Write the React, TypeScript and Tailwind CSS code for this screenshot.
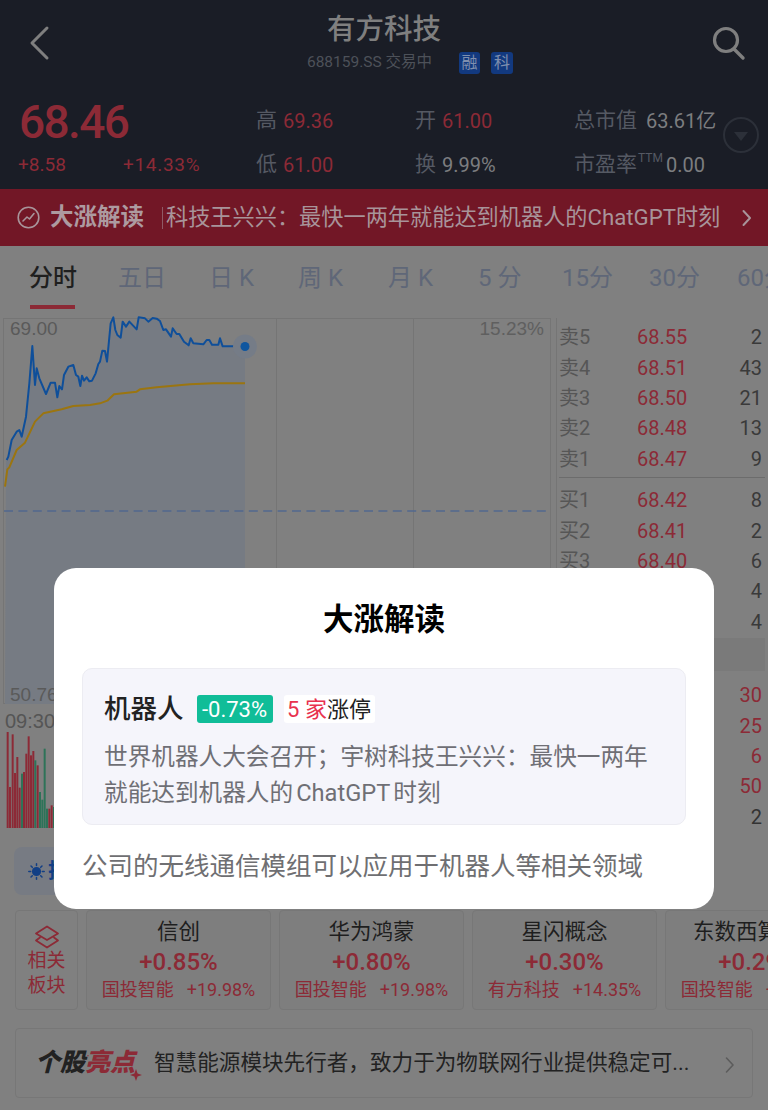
import React from "react";

const BLUE_LINE =
  "20,450 25,440 35,390 50,365 58,360 65,380 78,320 88,220 97,108 105,225 110,175 118,205 138,252 152,218 165,218 172,262 178,228 186,238 192,195 205,170 220,165 228,195 235,200 241,228 246,197 252,212 260,202 268,214 276,212 287,190 295,162 300,155 307,122 315,123 321,155 332,40 340,22 346,60 352,75 362,83 368,35 378,50 388,35 410,58 416,22 435,25 445,35 458,24 470,26 480,33 490,60 498,58 513,80 518,55 530,72 538,72 552,95 566,106 572,85 580,100 610,103 620,90 628,90 636,104 655,104 660,85 668,109 735,109";
const YELLOW_LINE =
  "15,530 22,478 28,472 50,420 75,398 105,335 130,310 185,298 220,288 270,285 300,280 322,272 342,253 410,245 420,238 470,232 570,223 640,220 735,220";

// points were read off a 3x crop, bring them back to chart pixels
const toChart = (line: string) =>
  line
    .split(" ")
    .map((p) => {
      const [x, y] = p.split(",");
      return `${+x / 3},${+y / 3 - 8}`;
    })
    .join(" ");

const VOLUME: [number, number, string][] = [
  [20, 155, "r"], [27, 320, "r"], [35, 162, "r"], [42, 278, "r"], [49, 230, "r"], [56, 322, "r"],
  [63, 280, "g"], [69, 275, "r"], [76, 220, "r"], [83, 168, "r"], [90, 225, "r"], [97, 212, "r"],
  [103, 240, "g"], [110, 255, "r"], [117, 335, "g"], [124, 358, "g"], [131, 205, "g"], [138, 385, "g"],
  [145, 385, "r"], [152, 375, "r"], [159, 380, "g"],
];

const SELLS = [
  ["卖5", "68.55", "2"],
  ["卖4", "68.51", "43"],
  ["卖3", "68.50", "21"],
  ["卖2", "68.48", "13"],
  ["卖1", "68.47", "9"],
];
const BUYS = [
  ["买1", "68.42", "8"],
  ["买2", "68.41", "2"],
  ["买3", "68.40", "6"],
  ["买4", "68.39", "4"],
  ["买5", "68.38", "4"],
];
const TRADES = [
  ["30", "text-[#8c2a36]"],
  ["25", "text-[#8c2a36]"],
  ["6", "text-[#8c2a36]"],
  ["50", "text-[#8c2a36]"],
  ["2", "text-[#333333]"],
];

const SECTORS = [
  ["信创", "+0.85%", "国投智能", "+19.98%"],
  ["华为鸿蒙", "+0.80%", "国投智能", "+19.98%"],
  ["星闪概念", "+0.30%", "有方科技", "+14.35%"],
  ["东数西算概念", "+0.29%", "国投智能", "+19.98%"],
];

const TABS: [string, string][] = [
  ["五日", "w-[47px] ml-[42px]"],
  ["日 K", "w-[45px] ml-[44px]"],
  ["周 K", "w-[45px] ml-[44px]"],
  ["月 K", "w-[45px] ml-[45px]"],
  ["5 分", "w-[42px] ml-[45px]"],
  ["15分", "w-[53px] ml-[42px]"],
  ["30分", "w-[58px] ml-[34px]"],
  ["60分", "w-[58px] ml-[30px]"],
];

function Stat({ label, value, red, w, gap = "mr-[6px]" }: { label: string; value: string; red?: boolean; w: string; gap?: string }) {
  return (
    <div className={`flex items-center ${w}`}>
      <span className={`text-[21px] text-[#555963] ${gap}`}>{label}</span>
      <span className={`text-[20px] ${red ? "text-[#8c2a36]" : "text-[#7c7d80]"}`}>{value}</span>
    </div>
  );
}

function BookRow({ row }: { row: string[] }) {
  return (
    <div className="flex items-center h-[30.4px] text-[20px] leading-none">
      <span className="w-[78px] text-[#565656]">{row[0]}</span>
      <span className="text-[#8c2a36]">{row[1]}</span>
      <span className="ml-auto text-[#3a3a3a]">{row[2]}</span>
    </div>
  );
}

export default function App() {
  return (
    <div className="relative w-[768px] h-[1110px] overflow-hidden bg-[#808080] font-['Roboto','Noto_Sans_CJK_SC',sans-serif]">
      {/* header */}
      <div className="relative h-[189px] bg-[#1a1d26]">
        <div className="flex flex-col items-center pt-[11px]">
          <div className="text-[28.5px] leading-[38px] font-medium text-[#7f7f7f]">有方科技</div>
          <div className="flex items-center mt-[3px] h-[22px] ml-[52px]">
            <span className="text-[15.5px] text-[#4d5159]">688159.SS 交易中</span>
            <span className="ml-[27px] w-[21px] h-[22px] rounded-[3px] bg-[#12397f] text-[#7f8fae] text-[16px] flex items-center justify-center">融</span>
            <span className="ml-[11px] w-[22px] h-[22px] rounded-[3px] bg-[#12397f] text-[#7f8fae] text-[16px] flex items-center justify-center">科</span>
          </div>
        </div>
        <svg className="absolute left-[28px] top-[25px]" width="24" height="36" viewBox="0 0 24 36" fill="none">
          <path d="M19 3 L4 18 L19 33" stroke="#7f7f7f" strokeWidth="3" strokeLinecap="round" strokeLinejoin="round" />
        </svg>
        <svg className="absolute left-[711px] top-[25px]" width="36" height="36" viewBox="0 0 36 36" fill="none">
          <circle cx="15" cy="15" r="11.5" stroke="#7f7f7f" strokeWidth="3.2" />
          <path d="M23 24 L32 33" stroke="#7f7f7f" strokeWidth="3.4" strokeLinecap="round" />
        </svg>

        <div className="flex absolute left-0 top-[99px] w-full">
          <div className="w-[256px] pl-[18px]">
            <div className="text-[46px] leading-[46px] font-medium tracking-[-1.6px] text-[#8c2a36] pl-[1px]">68.46</div>
            <div className="flex mt-[8px] text-[19px] leading-[24px] text-[#8c2a36]">
              <span className="w-[105px]">+8.58</span>
              <span className="tracking-[0.7px]">+14.33%</span>
            </div>
          </div>
          <div className="flex flex-col gap-[19px] pt-[9px]">
            <div className="flex h-[25px]">
              <Stat label="高" value="69.36" red w="w-[159px]" />
              <Stat label="开" value="61.00" red w="w-[159px]" />
              <Stat label="总市值" value="63.61亿" gap="mr-[9px]" w="w-[165px]" />
            </div>
            <div className="flex h-[25px]">
              <Stat label="低" value="61.00" red w="w-[159px]" />
              <Stat label="换" value="9.99%" w="w-[159px]" />
              <div className="flex items-center">
                <span className="text-[21px] text-[#555963]">市盈率</span>
                <span className="text-[12px] text-[#555963] self-start leading-[12px] ml-[1px]">TTM</span>
                <span className="text-[20px] text-[#7c7d80] ml-[3px]">0.00</span>
              </div>
            </div>
          </div>
        </div>
        <div className="absolute left-[723px] top-[117px] w-[36px] h-[36px] rounded-full border-2 border-[#2c3039] flex items-center justify-center">
          <div className="w-0 h-0 mt-[3px] border-l-[7px] border-r-[7px] border-t-[9px] border-l-transparent border-r-transparent border-t-[#2c3039]" />
        </div>
      </div>

      {/* red banner */}
      <div className="flex items-center h-[57px] bg-[#721726] pl-[17px]">
        <svg width="23" height="23" viewBox="0 0 23 23" fill="none" className="shrink-0">
          <circle cx="11.5" cy="11.5" r="10.3" stroke="#a8949a" strokeWidth="1.6" />
          <path d="M6 15 L10 11 L12.5 13 L17 7.5" stroke="#a8949a" strokeWidth="1.6" strokeLinecap="round" strokeLinejoin="round" />
        </svg>
        <span className="ml-[10px] text-[23.5px] font-bold text-[#ad9aa0] shrink-0">大涨解读</span>
        <div className="ml-[18px] w-[1px] h-[22px] bg-[#8f5a65] shrink-0" />
        <span className="ml-[3px] text-[22.2px] text-[#a8949a] whitespace-nowrap">科技王兴兴：最快一两年就能达到机器人的ChatGPT时刻</span>
        <svg width="12" height="20" viewBox="0 0 12 20" fill="none" className="absolute left-[741px]">
          <path d="M2.5 3 L9 10 L2.5 17" stroke="#a8949a" strokeWidth="2" strokeLinecap="round" strokeLinejoin="round" />
        </svg>
      </div>

      {/* tabs */}
      <div className="flex items-center h-[64px] pl-[29px] whitespace-nowrap overflow-hidden text-[24px] relative">
        <span className="w-[47px] font-medium text-[#1f1f1f]">分时</span>
        {TABS.map(([t, cls]) => (
          <span key={t} className={`shrink-0 text-[#5f6778] ${cls}`}>{t}</span>
        ))}
        <div className="absolute left-[30px] top-[59px] w-[45px] h-[4px] bg-[#8c2a36]" />
      </div>

      {/* chart + order book */}
      <div className="flex h-[386px] mt-[8px] pl-[3px]">
        <div className="relative w-[548px] h-[386px] border border-[#757575]">
          <div className="absolute left-[136px] top-0 h-full w-px bg-[#757575]" />
          <div className="absolute left-[272px] top-0 h-full w-px bg-[#757575]" />
          <div className="absolute left-[409px] top-0 h-full w-px bg-[#757575]" />
          <svg className="absolute left-[-4px] top-[-1px] overflow-visible" width="551" height="386" viewBox="0 0 551 386" fill="none">
            <polygon points={`6,142 ${toChart(BLUE_LINE)} 245,386 5,386`} fill="#767b83" />
            <line x1="4" y1="193" x2="551" y2="193" stroke="#52688f" strokeWidth="1.4" strokeDasharray="9 5.4" />
            <polyline points={toChart(BLUE_LINE)} stroke="#0f4f9a" strokeWidth="2" strokeLinejoin="round" />
            <polyline points={toChart(YELLOW_LINE)} stroke="#9b7510" strokeWidth="2" strokeLinejoin="round" />
            <circle cx="245" cy="28.5" r="12" fill="#757c87" />
            <circle cx="245" cy="28.5" r="4.5" fill="#0f569f" />
          </svg>
          <span className="absolute left-[6px] top-[0px] text-[19px] leading-[20px] text-[#5a5a5a] font-['Liberation_Sans',sans-serif]">69.00</span>
          <span className="absolute right-[6px] top-[0px] text-[19px] leading-[20px] text-[#5f5f5f] font-['Liberation_Sans',sans-serif]">15.23%</span>
          <span className="absolute left-[6px] bottom-[-2px] text-[19px] leading-[20px] text-[#5a5a5a] font-['Liberation_Sans',sans-serif]">50.76</span>
        </div>
        <div className="w-[209px] ml-[5px] pr-[3px] pl-[2px] pt-[4px] border-l border-[#757575]">
          <div>
            {SELLS.map((r) => (
              <BookRow key={r[0]} row={r} />
            ))}
          </div>
          <div className="h-px bg-[#6c6c6c] mt-[3px] mb-[7px] -mr-[3px]" />
          <div>
            {BUYS.map((r) => (
              <BookRow key={r[0]} row={r} />
            ))}
          </div>
          <div className="h-[33px] bg-[#7a7a7a] mt-[1px] -mr-[3px]" />
        </div>
      </div>

      {/* volume and trades */}
      <div className="flex h-[137px] pl-[4px]">
        <div className="relative w-[549px]">
          <span className="absolute left-[1px] top-[6px] text-[20px] leading-[22px] text-[#555555] font-['Liberation_Sans',sans-serif]">09:30</span>
          <svg className="absolute left-[-4px] top-[0px]" width="60" height="135" viewBox="0 0 60 135" fill="none">
            {VOLUME.map(([x, y, c]) => (
              <rect key={x} x={x / 3} y={28 + (y - 155) / 3} width="2" height={(443 - y) / 3} fill={c === "r" ? "#8c2a36" : "#2d7358"} />
            ))}
          </svg>
        </div>
        <div className="flex-1 pr-[6px] -mt-[24px]">
          {TRADES.map(([q, cls]) => (
            <div key={q} className={`h-[30.4px] flex items-center justify-end text-[20px] leading-none ${cls}`}>{q}</div>
          ))}
        </div>
      </div>

      {/* strip behind the dialog, its right end is hidden */}
      <div className="ml-[14px] w-[400px] mt-[6px] h-[48px] rounded-[8px] bg-[#777b83] flex items-center pl-[14px]">
        <svg width="17" height="17" viewBox="0 0 17 17" fill="none">
          <circle cx="8.5" cy="8.5" r="4.6" fill="#123f85" />
          <path d="M8.5 0.8V2.6M8.5 14.4v1.8M0.8 8.5h1.8M14.4 8.5h1.8M3 3l1.3 1.3M12.7 12.7L14 14M3 14l1.3-1.3M12.7 4.3L14 3" stroke="#123f85" strokeWidth="1.5" strokeLinecap="round" />
        </svg>
        <span className="ml-[3px] text-[20px] font-bold text-[#123f85]">技术分析</span>
      </div>

      {/* related sectors */}
      <div className="flex items-stretch h-[100px] mt-[15px] pl-[15px] gap-[8px] overflow-hidden">
        <div className="shrink-0 w-[63px] border border-[#777777] rounded-[4px] flex flex-col items-center pt-[14px]">
          <svg width="28" height="24" viewBox="0 0 28 24" fill="none">
            <path d="M14 1.5 L25 8.5 L14 15 L3 8.5 Z" stroke="#8c2a36" strokeWidth="1.8" strokeLinejoin="round" />
            <path d="M7 12.5 L3 15.5 L14 22.5 L25 15.5 L21 12.5" stroke="#8c2a36" strokeWidth="1.8" strokeLinejoin="round" strokeLinecap="round" />
          </svg>
          <div className="text-[19px] leading-[25px] text-[#8c2a36] text-center mt-[-1px] w-[40px]">相关板块</div>
        </div>
        {SECTORS.map(([name, pct, stock, change]) => (
          <div key={name} className="shrink-0 w-[185px] border border-[#777777] rounded-[4px] bg-[#7e7e7e] flex flex-col items-center pt-[7px] whitespace-nowrap">
            <div className="text-[21.5px] leading-[28px] text-[#1e1e1e]">{name}</div>
            <div className="text-[24px] leading-[32px] font-medium text-[#8c2a36]">{pct}</div>
            <div className="flex gap-[13px] text-[18px] leading-[23px] text-[#8c2a36]">
              <span>{stock}</span>
              <span>{change}</span>
            </div>
          </div>
        ))}
      </div>

      {/* highlight row */}
      <div className="relative flex items-center mx-[15px] mt-[18px] h-[70px] border border-[#777777] rounded-[4px] pl-[19px] pr-[16px]">
        <span className="w-[100px] text-[25px] font-black italic text-[#222222] whitespace-nowrap">个股<span className="text-[#8c2a36]">亮点</span></span>
        <svg className="absolute left-[68px] top-[26px]" width="72" height="50" viewBox="0 0 72 50" fill="#8c2a36">
          <path d="M4 0 L5 3 L8 4 L5 5 L4 8 L3 5 L0 4 L3 3 Z" transform="translate(0 -6)" />
          <path d="M52 16 L53.6 20.4 L58 22 L53.6 23.6 L52 28 L50.4 23.6 L46 22 L50.4 20.4 Z" transform="translate(0 -2)" />
        </svg>
        <span className="ml-[19px] text-[21.6px] text-[#222222] whitespace-nowrap">智慧能源模块先行者，致力于为物联网行业提供稳定可...</span>
        <svg className="absolute left-[708px] top-[26px]" width="12" height="20" viewBox="0 0 12 20" fill="none">
          <path d="M2.5 3 L9 10 L2.5 17" stroke="#5c5c5c" strokeWidth="1.6" strokeLinecap="round" strokeLinejoin="round" />
        </svg>
      </div>

      {/* dialog */}
      <div className="absolute left-[54px] top-[568px] w-[660px] h-[341px] bg-white rounded-[22px] px-[28px]">
        <div className="text-center text-[30.5px] leading-[40px] font-bold text-black mt-[32px]">大涨解读</div>
        <div className="mt-[28px] h-[157px] bg-[#f5f5fb] border border-[#ececf2] rounded-[10px] pl-[21px] pt-[25px]">
          <div className="flex items-center h-[30px]">
            <span className="text-[26.5px] font-medium text-[#222222]">机器人</span>
            <span className="ml-[13px] w-[76px] h-[28px] rounded-[3px] bg-[#10bd98] text-white text-[22px] flex items-center justify-center">-0.73%</span>
            <span className="ml-[11px] w-[91px] h-[28px] rounded-[3px] bg-white text-[22px] flex items-center justify-center whitespace-nowrap">
              <span className="text-[#e8324f]">5 家</span>
              <span className="text-[#222222]">涨停</span>
            </span>
          </div>
          <div className="mt-[16px] text-[23.65px] leading-[35.5px] text-[#6f6f75] w-[560px]">
            世界机器人大会召开；宇树科技王兴兴：最快一两年就能达到机器人的<span className="mx-[3px]">ChatGPT</span>时刻
          </div>
        </div>
        <div className="mt-[23px] text-[25.5px] leading-[36px] text-[#6f6f72] whitespace-nowrap">公司的无线通信模组可以应用于机器人等相关领域</div>
      </div>
    </div>
  );
}
